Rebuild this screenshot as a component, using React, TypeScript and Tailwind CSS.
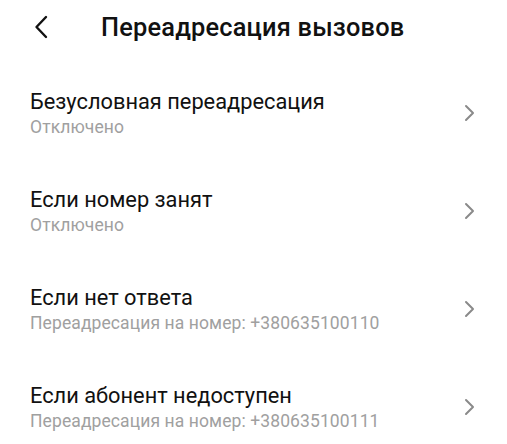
import React from 'react';

const rows = [
  { title: 'Безусловная переадресация', sub: 'Отключено' },
  { title: 'Если номер занят', sub: 'Отключено' },
  { title: 'Если нет ответа', sub: 'Переадресация на номер: +380635100110' },
  { title: 'Если абонент недоступен', sub: 'Переадресация на номер: +380635100111' },
];

const App: React.FC = () => {
  return (
    <div className="w-[507px] h-[444px] overflow-hidden bg-white font-['Roboto',sans-serif]">
      {/* Header */}
      <div className="h-[54px] flex items-center">
        <button className="ml-[31px] w-[20px] h-[24px] flex items-center justify-center">
          <svg width="16" height="24" viewBox="0 0 16 24" fill="none">
            <path d="M13 2 L3.5 12 L13 22" stroke="#111" strokeWidth="2.4" strokeLinecap="round" strokeLinejoin="round" />
          </svg>
        </button>
        <h1 className="ml-[50px] text-[25.4px] font-medium text-[#111] tracking-[0.2px]">Переадресация вызовов</h1>
      </div>

      {/* Rows */}
      <div className="mt-[10px]">
        {rows.map((r) => (
          <div key={r.title} className="h-[98px] flex items-center pl-[30px] pr-[32px]">
            <div className="flex-1">
              <div className="text-[21.8px] leading-[26px] text-[#111]">{r.title}</div>
              <div className="text-[17.5px] leading-[22px] text-[#a0a0a0] mt-[1px] tracking-[0.1px]">{r.sub}</div>
            </div>
            <svg width="12" height="18" viewBox="0 0 12 18" fill="none">
              <path d="M3 2 L10 9 L3 16" stroke="#8a8a8a" strokeWidth="2" strokeLinecap="round" strokeLinejoin="round" />
            </svg>
          </div>
        ))}
      </div>
    </div>
  );
};

export default App;
